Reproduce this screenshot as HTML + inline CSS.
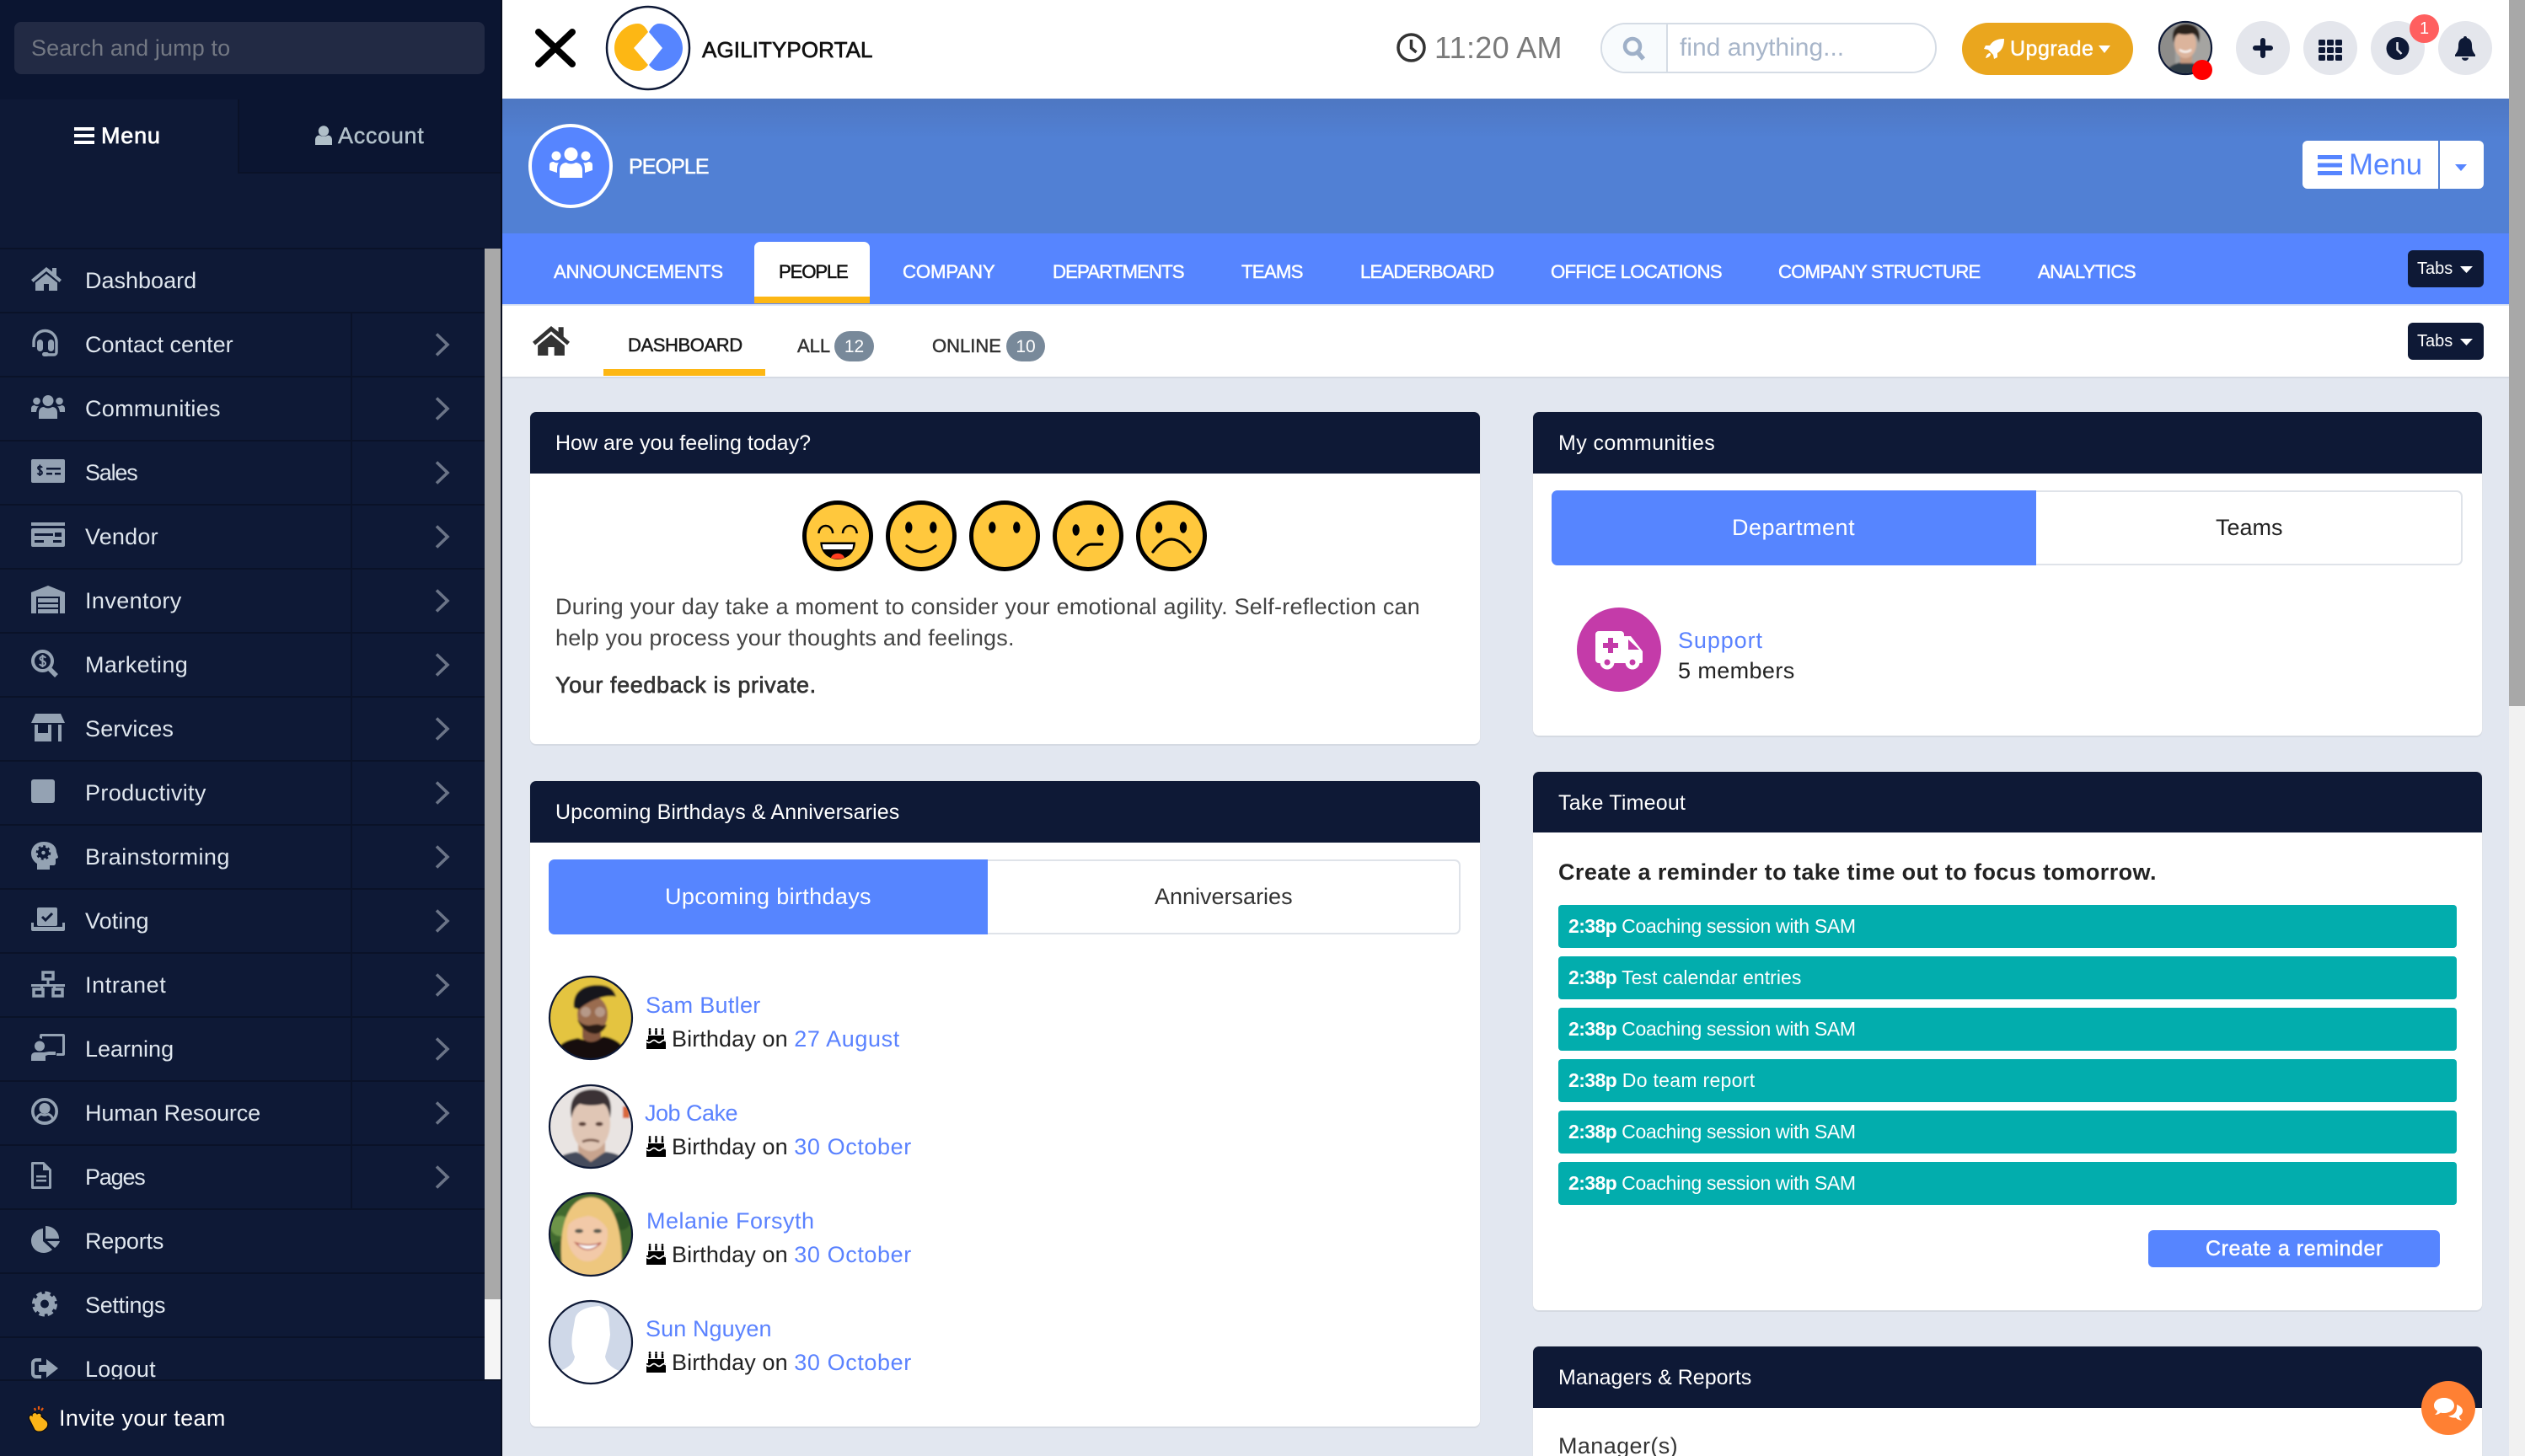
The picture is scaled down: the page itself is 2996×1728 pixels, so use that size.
<!DOCTYPE html>
<html lang="en"><head><meta charset="utf-8"><title>AgilityPortal</title>
<style>
html{margin:0;padding:0;background:#e2e7f0;width:2996px;height:1728px;overflow:hidden}
body{margin:0;padding:0;background:#e2e7f0;position:relative;width:2996px;height:1728px;overflow:hidden;font-family:"Liberation Sans",Arial,sans-serif;color:#333}
div,svg,span.t{position:absolute}
svg{overflow:visible}
.t{position:absolute;white-space:nowrap;line-height:1}
.semi{-webkit-text-stroke:.5px currentColor}
#side{left:0;top:0;width:596px;height:1728px;background:#0e1936;border-right:2px solid #070d20;box-sizing:border-box;overflow:hidden}
#list{left:0;top:294px;width:575px;height:1343px;overflow:hidden}
.row{left:0;width:575px;height:74px;border-top:2px solid #0a1228;color:#dfe6ee;font-size:27px;line-height:74px}
.row span{position:absolute;left:101px;white-space:nowrap}
.row i{position:absolute;left:416px;top:0;width:2px;height:76px;background:#0a1228}
.row svg.ch{left:516px;top:23px}
.ic{fill:#94a2b3}
.card{background:#fff;border-radius:7px;box-shadow:0 2px 0 #d5dae2,0 0 0 1px #e0e4ea}
.chd{background:#0e1936;left:0;top:0;border-radius:7px 7px 0 0}
.bar{left:1849px;width:1066px;height:51px;background:#02adad;border-radius:4px}
.bar+span b{letter-spacing:-.6px}
.nav{color:#fff;font-size:22.2px;top:312px}
.circ{width:64px;height:64px;border-radius:50%;background:#e4e6ec;top:25px}
</style></head>
<body>

<!-- ============ SIDEBAR ============ -->
<div id="side">
  <div style="left:0;top:0;width:596px;height:118px;background:#0b1531"></div>
  <div style="left:17px;top:26px;width:558px;height:62px;background:#222a44;border-radius:8px"></div>
  <span class="t" style="left:37px;top:44px;font-size:27px;color:#737883;letter-spacing:.12px">Search and jump to</span>

  <div style="left:282px;top:118px;width:312px;height:86px;background:#0b1531;border-left:2px solid #0a1228;border-bottom:2px solid #0a1228"></div>
  <svg style="left:88px;top:151px" width="24" height="20"><path fill="#fff" d="M0 0h24v4H0zM0 8h24v4H0zM0 16h24v4H0z"/></svg>
  <span class="t semi" style="left:120px;top:148px;font-size:27px;color:#fff;letter-spacing:.8px;-webkit-text-stroke-width:.7px">Menu</span>
  <svg style="left:374px;top:149px" width="20" height="23"><circle cx="10" cy="6.500" r="6.200" fill="#b0bfc9"/><path fill="#b0bfc9" d="M0 23v-6c0-4 3-5.500 5-5.500 3 2 7 2 10 0 2 0 5 1.500 5 5.500v6z"/></svg>
  <span class="t semi" style="left:401px;top:148px;font-size:27px;color:#b0bfc9;letter-spacing:.7px">Account</span>

  <div id="list">
    <div class="row" style="top:0"><span>Dashboard</span></div>
    <div class="row" style="top:76px"><span>Contact center</span><i></i><svg class="ch" width="18" height="28"><path d="M2 1.500L15 14 2 26.500" fill="none" stroke="#6b7487" stroke-width="3.600"/></svg></div>
    <div class="row" style="top:152px"><span style="letter-spacing:.3px">Communities</span><i></i><svg class="ch" width="18" height="28"><path d="M2 1.500L15 14 2 26.500" fill="none" stroke="#6b7487" stroke-width="3.600"/></svg></div>
    <div class="row" style="top:228px"><span style="letter-spacing:-1.200px">Sales</span><i></i><svg class="ch" width="18" height="28"><path d="M2 1.500L15 14 2 26.500" fill="none" stroke="#6b7487" stroke-width="3.600"/></svg></div>
    <div class="row" style="top:304px"><span style="letter-spacing:.2px">Vendor</span><i></i><svg class="ch" width="18" height="28"><path d="M2 1.500L15 14 2 26.500" fill="none" stroke="#6b7487" stroke-width="3.600"/></svg></div>
    <div class="row" style="top:380px"><span style="letter-spacing:.4px">Inventory</span><i></i><svg class="ch" width="18" height="28"><path d="M2 1.500L15 14 2 26.500" fill="none" stroke="#6b7487" stroke-width="3.600"/></svg></div>
    <div class="row" style="top:456px"><span style="letter-spacing:.4px">Marketing</span><i></i><svg class="ch" width="18" height="28"><path d="M2 1.500L15 14 2 26.500" fill="none" stroke="#6b7487" stroke-width="3.600"/></svg></div>
    <div class="row" style="top:532px"><span style="letter-spacing:.2px">Services</span><i></i><svg class="ch" width="18" height="28"><path d="M2 1.500L15 14 2 26.500" fill="none" stroke="#6b7487" stroke-width="3.600"/></svg></div>
    <div class="row" style="top:608px"><span style="letter-spacing:.35px">Productivity</span><i></i><svg class="ch" width="18" height="28"><path d="M2 1.500L15 14 2 26.500" fill="none" stroke="#6b7487" stroke-width="3.600"/></svg></div>
    <div class="row" style="top:684px"><span style="letter-spacing:.4px">Brainstorming</span><i></i><svg class="ch" width="18" height="28"><path d="M2 1.500L15 14 2 26.500" fill="none" stroke="#6b7487" stroke-width="3.600"/></svg></div>
    <div class="row" style="top:760px"><span style="letter-spacing:.1px">Voting</span><i></i><svg class="ch" width="18" height="28"><path d="M2 1.500L15 14 2 26.500" fill="none" stroke="#6b7487" stroke-width="3.600"/></svg></div>
    <div class="row" style="top:836px"><span style="letter-spacing:.6px">Intranet</span><i></i><svg class="ch" width="18" height="28"><path d="M2 1.500L15 14 2 26.500" fill="none" stroke="#6b7487" stroke-width="3.600"/></svg></div>
    <div class="row" style="top:912px"><span>Learning</span><i></i><svg class="ch" width="18" height="28"><path d="M2 1.500L15 14 2 26.500" fill="none" stroke="#6b7487" stroke-width="3.600"/></svg></div>
    <div class="row" style="top:988px"><span style="letter-spacing:-.15px">Human Resource</span><i></i><svg class="ch" width="18" height="28"><path d="M2 1.500L15 14 2 26.500" fill="none" stroke="#6b7487" stroke-width="3.600"/></svg></div>
    <div class="row" style="top:1064px"><span style="letter-spacing:-1.200px">Pages</span><i></i><svg class="ch" width="18" height="28"><path d="M2 1.500L15 14 2 26.500" fill="none" stroke="#6b7487" stroke-width="3.600"/></svg></div>
    <div class="row" style="top:1140px"><span style="letter-spacing:-.2px">Reports</span></div>
    <div class="row" style="top:1216px"><span style="letter-spacing:-.3px">Settings</span></div>
    <div class="row" style="top:1292px"><span style="letter-spacing:.2px">Logout</span></div>
  </div>

  <!-- sidebar icons -->
  <svg class="ic" style="left:37px;top:317px" width="36" height="28" viewBox="0 0 36 28"><path d="M18 0L0 15l2.500 3L18 5l15.500 13 2.500-3-6-5V1h-5v4.500z"/><path d="M18 8L5 18.500V28h10v-8h6v8h10V18.500z"/></svg>
  <svg style="left:37px;top:391px" width="33" height="32" viewBox="0 0 33 32"><path d="M3 21v-6a13.500 13.500 0 0 1 27 0v12a3 3 0 0 1-3 3h-9" fill="none" stroke="#94a2b3" stroke-width="3.400"/><rect x="7" y="12" width="7" height="14" rx="3.500" fill="#94a2b3"/><rect x="20" y="12" width="7" height="14" rx="3.500" fill="#94a2b3"/><rect x="13" y="27" width="8" height="5" rx="2.500" fill="#94a2b3"/></svg>
  <svg class="ic" style="left:37px;top:469px" width="40" height="28" viewBox="0 0 40 28"><circle cx="20" cy="6.500" r="6.500"/><circle cx="6.500" cy="7" r="4.300"/><circle cx="33.500" cy="7" r="4.300"/><path d="M9 28v-7c0-5 3-7 6-7 3 2 7 2 10 0 3 0 6 2 6 7v7z"/><path d="M0 20v-4c0-3 2-4 4-4 1 1 3 1.500 5 1-2 2-2.500 4-3 7zM40 20v-4c0-3-2-4-4-4-1 1-3 1.500-5 1 2 2 2.500 4 3 7z"/></svg>
  <svg style="left:37px;top:545px" width="40" height="28" viewBox="0 0 40 28"><rect width="40" height="28" rx="2" fill="#94a2b3"/><path d="M13 10c-1-2-5-2-5 .5S13 13 13 16s-4.500 2.500-5.500.5M10.300 6.500V20" fill="none" stroke="#0e1936" stroke-width="1.800"/><path d="M18 10h17v2.500H18zM18 16h7v2.500h-7zM28 16h7v2.500h-7z" fill="#0e1936"/></svg>
  <svg style="left:37px;top:620px" width="40" height="29" viewBox="0 0 40 29"><rect width="40" height="4" fill="#94a2b3"/><rect y="7" width="40" height="22" rx="2" fill="#94a2b3"/><path d="M4 13h22v3H4zM4 21h11v3H4zM28 12h8v5h-8zM26 21h10v3H26z" fill="#0e1936"/></svg>
  <svg style="left:37px;top:695px" width="40" height="33" viewBox="0 0 40 33"><path fill="#94a2b3" d="M0 8L20 0l20 8v25h-6V13H6v20H0z"/><path fill="#94a2b3" d="M8 15h24v5H8zM8 22h24v4H8zM8 28h24v5H8z"/></svg>
  <svg style="left:37px;top:771px" width="32" height="33" viewBox="0 0 32 33"><circle cx="13.500" cy="13.500" r="11.500" fill="none" stroke="#94a2b3" stroke-width="4"/><path d="M21 22l9 9" stroke="#94a2b3" stroke-width="5.500"/><path d="M17 10c-1-2.500-6.500-2.500-6.500.5S17 13 17 16.500s-6 3-7 .5M13.500 6v15" fill="none" stroke="#94a2b3" stroke-width="2"/></svg>
  <svg style="left:37px;top:847px" width="40" height="33" viewBox="0 0 40 33"><path fill="#94a2b3" d="M5 0h30l5 11H0zM4 13h4v10h12V13h4v20H4zM32 13h4v20h-4z"/></svg>
  <svg style="left:37px;top:925px" width="28" height="28"><rect width="28" height="28" rx="3" fill="#94a2b3"/></svg>
  <svg style="left:37px;top:999px" width="32" height="33" viewBox="0 0 32 33"><path fill="#94a2b3" d="M15 0c10 0 15 6 15 12l2 6c0 1-1 2-3 2v5c0 2-1 3-3 3h-4v5H7v-7C2 23 0 18 0 14 0 6 6 0 15 0z"/><circle cx="14.500" cy="13" r="4.500" fill="none" stroke="#0e1936" stroke-width="4.500"/><circle cx="14.500" cy="13" r="7.500" fill="none" stroke="#0e1936" stroke-width="2.500" stroke-dasharray="2.800 3"/></svg>
  <svg style="left:37px;top:1077px" width="40" height="28" viewBox="0 0 40 28"><rect x="7" y="0" width="24" height="22" rx="2" fill="#94a2b3"/><path d="M13 11l4 4 8-8" fill="none" stroke="#0e1936" stroke-width="3"/><path d="M0 18h3v6h34v-6h3v8a2 2 0 0 1-2 2H2a2 2 0 0 1-2-2z" fill="#94a2b3"/><rect x="3" y="23" width="34" height="2" fill="#94a2b3"/></svg>
  <svg style="left:37px;top:1152px" width="40" height="32" viewBox="0 0 40 32"><g fill="none" stroke="#94a2b3" stroke-width="3.500"><rect x="14" y="2" width="12" height="8"/><rect x="3" y="22" width="11" height="8"/><rect x="26" y="22" width="11" height="8"/></g><path d="M18.500 11h3v5H40v3H29v3h-3v-3H14v3h-3v-3H0v-3h18.500z" fill="#94a2b3"/></svg>
  <svg style="left:37px;top:1227px" width="40" height="32" viewBox="0 0 40 32"><circle cx="10" cy="14.500" r="6" fill="#94a2b3"/><path d="M0 32v-5c0-4 3-5 5-5h10l6-1h8v4h-9l-3 1v6z" fill="#94a2b3"/><path d="M10 5V2a2 2 0 0 1 2-2h26a2 2 0 0 1 2 2v22a2 2 0 0 1-2 2h-8v-3h7V3H13v3z" fill="#94a2b3"/></svg>
  <svg style="left:37px;top:1303px" width="32" height="32" viewBox="0 0 32 32"><circle cx="16" cy="16" r="14.200" fill="none" stroke="#94a2b3" stroke-width="3.600"/><circle cx="16" cy="12.500" r="6.500" fill="#94a2b3"/><path d="M5 25c1-5 5-7 7-7 2 1.500 6 1.500 8 0 2 0 6 2 7 7-6 6-16 6-22 0z" fill="#94a2b3"/><path d="M8 25c1-3 3-4 4.500-4 2 1 5 1 7 0 1.500 0 3.500 1 4.500 4-4 4-12 4-16 0z" fill="#0e1936"/></svg>
  <svg style="left:37px;top:1379px" width="24" height="32" viewBox="0 0 24 32"><path d="M1.500 1.500h13l8 8v21h-21z" fill="none" stroke="#94a2b3" stroke-width="3" stroke-linejoin="round"/><path d="M14 2v8h8z" fill="#94a2b3"/><path d="M6 16h12v2.500H6zM6 21h12v2.500H6z" fill="#94a2b3"/></svg>
  <svg style="left:37px;top:1455px" width="34" height="32" viewBox="0 0 34 32"><path d="M14 3C6 4 0 10 0 17.500 0 26 7 32 15 32c4 0 8-2 10-4L14 18z" fill="#94a2b3"/><path d="M17 0v15h16C33 7 26 0 17 0z" fill="#94a2b3"/><path d="M19 18l9 8c2.500-2 5-5 6-8z" fill="#94a2b3"/></svg>
  <svg style="left:38px;top:1532px" width="30" height="31" viewBox="0 0 30 31"><circle cx="15" cy="15.500" r="8.500" fill="none" stroke="#94a2b3" stroke-width="7"/><circle cx="15" cy="15.500" r="13" fill="none" stroke="#94a2b3" stroke-width="4" stroke-dasharray="6.500 3.700"/></svg>
  <svg style="left:37px;top:1611px" width="32" height="26" viewBox="0 0 32 26"><path d="M12 3H6a4 4 0 0 0-4 4v12a4 4 0 0 0 4 4h6" fill="none" stroke="#94a2b3" stroke-width="4"/><path d="M9 9h9V2l14 11-14 11v-7H9z" fill="#94a2b3"/></svg>

  <!-- sidebar scrollbar -->
  <div style="left:575px;top:295px;width:20px;height:1247px;background:#a9a9a9"></div>
  <div style="left:575px;top:1542px;width:20px;height:95px;background:#f5f5f5"></div>

  <!-- footer -->
  <div style="left:0;top:1637px;width:596px;height:91px;background:#0e1936;border-top:2px solid #0a1228;box-sizing:border-box"></div>
  <svg style="left:31px;top:1669px" width="30" height="31" viewBox="0 0 30 31"><path d="M4 16C2 12 5 9 7 11c0-3 4-5 6-2 3-2 6 0 5 3l6 5c3 3 2 8-1 10-4 4-10 4-13 1z" fill="#fbb418" stroke="#0a0a10" stroke-width="1.200"/><path d="M10 2l1 3M15 0v4M20 2l-2 3" stroke="#e8590c" stroke-width="2.200"/></svg>
  <span class="t" style="left:70px;top:1670px;font-size:27px;color:#fff;letter-spacing:.35px">Invite your team</span>
</div>

<!-- ============ TOP BAR ============ -->
<div style="left:596px;top:0;width:2381px;height:117px;background:#fff"></div>
<svg style="left:634px;top:33px" width="50" height="48"><path d="M5 5l40 38M45 5L5 43" stroke="#000" stroke-width="8" stroke-linecap="round"/></svg>
<svg style="left:0;top:0" width="1" height="1"><circle cx="769" cy="57" r="49" fill="#fff" stroke="#0e1936" stroke-width="2.500"/><path fill="#fdb714" d="M757 28C742 28 729 42 729 57C729 72 742 84 757 84C762 84 766 81 769 77L752 57L769 38C766 32 762 28 757 28Z"/><path fill="#5685ff" d="M782 28C797 28 810 42 810 57C810 72 797 84 782 84C777 84 773 81 770 77L786 57L770 38C773 32 777 28 782 28Z"/></svg>
<span class="t semi" style="left:833px;top:46px;font-size:26px;color:#111;letter-spacing:.1px;-webkit-text-stroke-width:.7px">AGILITYPORTAL</span>

<svg style="left:1657px;top:39px" width="35" height="35"><circle cx="17.500" cy="17.500" r="15.500" fill="none" stroke="#333" stroke-width="3.500"/><path d="M17.500 8v10l6 5" fill="none" stroke="#333" stroke-width="3.500"/></svg>
<span class="t" style="left:1702px;top:39px;font-size:36px;color:#7a7a7a;letter-spacing:.3px">11:20 AM</span>

<div style="left:1899px;top:27px;width:399px;height:60px;border:2px solid #d5dce5;border-radius:30px;box-sizing:border-box;background:#fff;overflow:hidden">
  <div style="left:0;top:0;width:76px;height:56px;background:#f8fbfd;border-right:2px solid #d5dce5"></div>
</div>
<svg style="left:1925px;top:43px" width="28" height="29"><circle cx="12" cy="12" r="9" fill="none" stroke="#9fb0c8" stroke-width="4.500"/><path d="M18 19l7 8" stroke="#9fb0c8" stroke-width="5.500"/></svg>
<span class="t" style="left:1993px;top:42px;font-size:30px;color:#a7b5c9">find anything...</span>

<div style="left:2328px;top:27px;width:203px;height:62px;border-radius:31px;background:#eaa61e"></div>
<svg style="left:2354px;top:46px" width="24" height="24" viewBox="0 0 24 24"><path fill="#fff" d="M24 0C15 0 10 3 7 8H2L0 12l5 1 6 6 1 5 4-2v-5c5-3 8-8 8-17zM7 17c-2 0-4 2-5 6 4-1 6-3 6-5z"/></svg>
<span class="t semi" style="left:2385px;top:46px;font-size:25px;color:#fff;letter-spacing:.5px">Upgrade</span>
<svg style="left:2490px;top:54px" width="14" height="9"><path d="M0 0h14L7 9z" fill="#fff"/></svg>

<svg style="left:2561px;top:25px" width="64" height="64" viewBox="0 0 64 64">
  <defs><clipPath id="ca"><circle cx="32" cy="32" r="30"/></clipPath><filter id="bl"><feGaussianBlur stdDeviation="1"/></filter><filter id="bl2"><feGaussianBlur stdDeviation="1.200"/></filter></defs>
  <g clip-path="url(#ca)"><g filter="url(#bl)"><rect width="64" height="64" fill="#a5a4a1"/><rect width="20" height="64" fill="#8d8c8a"/><path d="M8 64c2-10 10-14 24-16 12 2 22 6 24 16z" fill="#2d3a44"/><rect x="26" y="36" width="14" height="14" fill="#c69a80"/><ellipse cx="32" cy="27" rx="13" ry="17" fill="#dcb49c"/><path d="M18 26C14 10 22 3 33 3s19 7 15 23c-2-7-4-10-8-11-8 2-13 1-16 0-3 2-5 5-6 11z" fill="#2a201c"/><path d="M25 34q7 5 14 0" stroke="#fff" stroke-width="2" fill="none"/></g></g>
  <circle cx="32" cy="32" r="31" fill="none" stroke="#0e1936" stroke-width="2.200"/>
</svg>
<div style="left:2601px;top:71px;width:24px;height:24px;border-radius:50%;background:#f00"></div>

<div class="circ" style="left:2653px"></div>
<svg style="left:2673px;top:45px" width="24" height="24"><path d="M12 3v18M3 12h18" stroke="#0e1936" stroke-width="6" stroke-linecap="round"/></svg>
<div class="circ" style="left:2733px"></div>
<svg style="left:2751px;top:47px" width="28" height="25" fill="#0e1936"><rect width="8" height="7" rx="1.500"/><rect x="10" width="8" height="7" rx="1.500"/><rect x="20" width="8" height="7" rx="1.500"/><rect y="9" width="8" height="7" rx="1.500"/><rect x="10" y="9" width="8" height="7" rx="1.500"/><rect x="20" y="9" width="8" height="7" rx="1.500"/><rect y="18" width="8" height="7" rx="1.500"/><rect x="10" y="18" width="8" height="7" rx="1.500"/><rect x="20" y="18" width="8" height="7" rx="1.500"/></svg>
<div class="circ" style="left:2813px"></div>
<svg style="left:2831px;top:44px" width="28" height="27"><circle cx="14" cy="13.500" r="13.500" fill="#0e1936"/><path d="M13.500 6v9l5 5" fill="none" stroke="#e4e6ec" stroke-width="2.500"/></svg>
<div class="circ" style="left:2893px"></div>
<svg style="left:2913px;top:43px" width="24" height="29"><path fill="#0e1936" d="M12 0c1.500 0 2 1 2 2 4 1 6 4 6 9 0 5 1 7 4 11v2H0v-2c3-4 4-6 4-11 0-5 2-8 6-9 0-1 .5-2 2-2z"/><path fill="#0e1936" d="M8 25.500h8c0 2-2 3.500-4 3.500s-4-1.500-4-3.500z"/></svg>
<div style="left:2859px;top:17px;width:35px;height:34px;border-radius:50%;background:#ff5f5f;color:#fff;font-size:20px;line-height:34px;text-align:center">1</div>

<!-- ============ HEADER BAND ============ -->
<div style="left:596px;top:117px;width:2381px;height:160px;background:linear-gradient(#4e77c2,#5180d4 30%,#5180d4)"></div>
<div style="left:627px;top:147px;width:100px;height:100px;border-radius:50%;background:#5685ff;border:4px solid #fff;box-sizing:border-box"></div>
<svg style="left:652px;top:175px" width="51" height="36" viewBox="0 0 51 36" fill="#fff"><circle cx="25.500" cy="8" r="8"/><circle cx="8" cy="10" r="5.500"/><circle cx="43" cy="10" r="5.500"/><path d="M12 36v-9c0-6 4-9 8-9 3 2 8 2 11 0 4 0 8 3 8 9v9z"/><path d="M0 27v-6c0-3 2-4 5-4 1 1 4 2 6 1-2 3-2 6-2 12zM51 27v-6c0-3-2-4-5-4-1 1-4 2-6 1 2 3 2 6 2 12z"/></svg>
<span class="t semi" style="left:746px;top:186px;font-size:25px;color:#fff;letter-spacing:-.9px">PEOPLE</span>

<div style="left:2732px;top:167px;width:215px;height:57px;background:#fff;border-radius:6px"></div>
<div style="left:2893px;top:167px;width:2px;height:57px;background:#5180d4"></div>
<svg style="left:2750px;top:184px" width="29" height="24"><path fill="#5685ff" d="M0 0h29v5H0zM0 9.500h29v5H0zM0 19h29v5H0z"/></svg>
<span class="t" style="left:2787px;top:179px;font-size:34.800px;color:#5685ff">Menu</span>
<svg style="left:2913px;top:195px" width="14" height="8"><path d="M0 0h14L7 8z" fill="#5685ff"/></svg>

<!-- ============ NAV BAND ============ -->
<div style="left:596px;top:277px;width:2381px;height:84px;background:#5685ff"></div>
<div style="left:596px;top:361px;width:2381px;height:2px;background:#dfe6f3"></div>
<div style="left:895px;top:287px;width:137px;height:73px;background:#fff;border-radius:7px 7px 0 0;overflow:hidden"><div style="left:0;top:65px;width:137px;height:8px;background:#fdb714"></div></div>
<span class="t nav semi" style="left:657px;letter-spacing:-.3px">ANNOUNCEMENTS</span>
<span class="t nav semi" style="left:924px;color:#111;letter-spacing:-1.200px">PEOPLE</span>
<span class="t nav semi" style="left:1071px;letter-spacing:-.15px">COMPANY</span>
<span class="t nav semi" style="left:1249px;letter-spacing:-.9px">DEPARTMENTS</span>
<span class="t nav semi" style="left:1473px;letter-spacing:-.76px">TEAMS</span>
<span class="t nav semi" style="left:1614px;letter-spacing:-.87px">LEADERBOARD</span>
<span class="t nav semi" style="left:1840px;letter-spacing:-.7px">OFFICE LOCATIONS</span>
<span class="t nav semi" style="left:2110px;letter-spacing:-.8px">COMPANY STRUCTURE</span>
<span class="t nav semi" style="left:2418px;letter-spacing:-.63px">ANALYTICS</span>
<div style="left:2857px;top:297px;width:90px;height:44px;background:#0e1936;border-radius:6px"></div>
<span class="t" style="left:2868px;top:309px;font-size:20px;color:#fff">Tabs</span>
<svg style="left:2919px;top:316px" width="15" height="8"><path d="M0 0h15L7.500 8z" fill="#fff"/></svg>

<!-- ============ SUB TABS ============ -->
<div style="left:596px;top:363px;width:2381px;height:84px;background:#fff"></div>
<div style="left:596px;top:447px;width:2381px;height:2px;background:#d5dae3"></div>
<svg style="left:632px;top:387px" width="44" height="35" viewBox="0 0 36 28" preserveAspectRatio="none"><path fill="#333" d="M18 0L0 15l2.500 3L18 5l15.500 13 2.500-3-6-5V1h-5v4.500z"/><path fill="#333" d="M18 8L5 18.500V28h10v-8h6v8h10V18.500z"/></svg>
<span class="t semi" style="left:745px;top:399px;font-size:22px;color:#1a1a1a;letter-spacing:-.4px">DASHBOARD</span>
<div style="left:716px;top:438px;width:192px;height:8px;background:#fdb714"></div>
<span class="t semi" style="left:946px;top:400px;font-size:22px;color:#333">ALL</span>
<div style="left:990px;top:393px;width:47px;height:36px;border-radius:18px;background:#78899a;color:#fff;font-size:21px;line-height:37px;text-align:center">12</div>
<span class="t semi" style="left:1106px;top:400px;font-size:22px;color:#333">ONLINE</span>
<div style="left:1194px;top:393px;width:46px;height:36px;border-radius:18px;background:#78899a;color:#fff;font-size:21px;line-height:37px;text-align:center">10</div>
<div style="left:2857px;top:383px;width:90px;height:44px;background:#0e1936;border-radius:6px"></div>
<span class="t" style="left:2868px;top:395px;font-size:20px;color:#fff">Tabs</span>
<svg style="left:2919px;top:402px" width="15" height="8"><path d="M0 0h15L7.500 8z" fill="#fff"/></svg>

<!-- ============ FEELING CARD ============ -->
<div class="card" style="left:629px;top:489px;width:1127px;height:394px"><div class="chd" style="width:1127px;height:73px"></div></div>
<span class="t" style="left:659px;top:514px;font-size:25px;color:#fff">How are you feeling today?</span>
<svg style="left:0;top:0" width="1" height="1">
  <g transform="translate(994 636)"><circle r="39.500" fill="#ffc83d" stroke="#000" stroke-width="5"/><path d="M-22.500-3a8.300 9 0 0 1 16.600 0M6-3a8.300 9 0 0 1 16.600 0" fill="none" stroke="#000" stroke-width="2.500"/><path d="M-20.700 7.500H21C21 20 10 28 0 28S-20.700 20-20.700 7.500z" fill="#000"/><path d="M-18.300 10h36.600l-1 6h-34.600z" fill="#fff"/><path d="M-8 26c2-7 14-7 16 0-5 2-11 2-16 0z" fill="#ff3d1f"/></g>
  <g transform="translate(1093 636)"><circle r="39.500" fill="#ffc83d" stroke="#000" stroke-width="5"/><ellipse cx="-14.700" cy="-10" rx="4.200" ry="6.700"/><ellipse cx="14.300" cy="-10" rx="4.200" ry="6.700"/><path d="M-17 12Q0 26 17 12" fill="none" stroke="#000" stroke-width="3.200" stroke-linecap="round"/></g>
  <g transform="translate(1192 636)"><circle r="39.500" fill="#ffc83d" stroke="#000" stroke-width="5"/><ellipse cx="-14.700" cy="-10" rx="4.200" ry="6.700"/><ellipse cx="14.300" cy="-10" rx="4.200" ry="6.700"/></g>
  <g transform="translate(1291 636)"><circle r="39.500" fill="#ffc83d" stroke="#000" stroke-width="5"/><ellipse cx="-14.300" cy="-7" rx="4.200" ry="6.700"/><ellipse cx="14.700" cy="-7" rx="4.200" ry="6.700"/><path d="M-12 22Q-4 10 4 10H16.700" fill="none" stroke="#000" stroke-width="3.200" stroke-linecap="round"/></g>
  <g transform="translate(1390 636)"><circle r="39.500" fill="#ffc83d" stroke="#000" stroke-width="5"/><ellipse cx="-15" cy="-10" rx="4.200" ry="6.700"/><ellipse cx="14" cy="-10" rx="4.200" ry="6.700"/><path d="M-22 19Q0-11 22 19" fill="none" stroke="#000" stroke-width="3.200" stroke-linecap="round"/></g>
</svg>
<span class="t" style="left:659px;top:707px;font-size:27px;color:#444;letter-spacing:.23px">During your day take a moment to consider your emotional agility. Self-reflection can</span>
<span class="t" style="left:659px;top:744px;font-size:27px;color:#444;letter-spacing:.2px">help you process your thoughts and feelings.</span>
<span class="t semi" style="left:659px;top:800px;font-size:27px;color:#333;letter-spacing:.6px;-webkit-text-stroke-width:.7px">Your feedback is private.</span>

<!-- ============ BIRTHDAYS CARD ============ -->
<div class="card" style="left:629px;top:927px;width:1127px;height:766px"><div class="chd" style="width:1127px;height:73px"></div></div>
<span class="t" style="left:659px;top:952px;font-size:25px;color:#fff;letter-spacing:.12px">Upcoming Birthdays &amp; Anniversaries</span>
<div style="left:651px;top:1020px;width:1082px;height:89px;border:2px solid #dfe3e9;border-radius:7px;box-sizing:border-box"></div>
<div style="left:651px;top:1020px;width:521px;height:89px;background:#5685ff;border-radius:7px 0 0 7px"></div>
<span class="t" style="left:789px;top:1051px;font-size:27px;color:#fff;letter-spacing:.35px">Upcoming birthdays</span>
<span class="t" style="left:1370px;top:1051px;font-size:27px;color:#333">Anniversaries</span>

<svg style="left:651px;top:1158px" width="100" height="100" viewBox="0 0 100 100"><defs><clipPath id="c1"><circle cx="50" cy="50" r="49"/></clipPath></defs><g clip-path="url(#c1)"><g filter="url(#bl)"><rect width="100" height="100" fill="#e4c43f"/><path d="M5 100c2-18 16-24 30-26 10 4 20 3 30-2 14 2 26 10 32 28z" fill="#120c0a"/><path d="M40 60h22v14c-8 6-16 6-22 0z" fill="#84563f"/><ellipse cx="52" cy="46" rx="18" ry="22" fill="#9a6c50"/><path d="M34 52c4 10 12 17 22 17 6-1 11-5 13-11l-6 1c-6-3-11 0-15 0-6 0-10-3-14-7z" fill="#2a1a14"/><path d="M30 38C28 22 38 11 58 11c14 0 20 6 22 14-12-3-32 4-44 15z" fill="#15121a"/><circle cx="44" cy="43" r="6" fill="#c9b8ae" opacity=".6"/><circle cx="61" cy="43" r="6" fill="#c9b8ae" opacity=".6"/></g></g><circle cx="50" cy="50" r="49" fill="none" stroke="#0e1936" stroke-width="2.200"/></svg>
<svg style="left:651px;top:1287px" width="100" height="100" viewBox="0 0 100 100"><defs><clipPath id="c2"><circle cx="50" cy="50" r="49"/></clipPath></defs><g clip-path="url(#c2)"><g filter="url(#bl)"><rect width="100" height="100" fill="#e9e4e2"/><rect x="88" y="26" width="8" height="14" fill="#d9683a"/><path d="M5 100c2-14 14-18 28-20l17 8 18-8c14 2 24 6 28 20z" fill="#454c5c"/><path d="M35 66h32v14L50 92 35 80z" fill="#c8a48e"/><ellipse cx="50" cy="46" rx="23" ry="33" fill="#e0c6b5"/><path d="M27 40C23 16 34 6 52 6c16 0 25 10 21 34-2-10-4-15-8-17-10 3-22 2-28 0-6 3-8 9-10 17z" fill="#3a3035"/><ellipse cx="40" cy="47" rx="4.500" ry="2.500" fill="#5c4038"/><ellipse cx="60" cy="47" rx="4.500" ry="2.500" fill="#5c4038"/><path d="M40 68q10-4 20 0" stroke="#7a5a4c" stroke-width="3" fill="none"/></g></g><circle cx="50" cy="50" r="49" fill="none" stroke="#0e1936" stroke-width="2.200"/></svg>
<svg style="left:651px;top:1415px" width="100" height="100" viewBox="0 0 100 100"><defs><clipPath id="c3"><circle cx="50" cy="50" r="49"/></clipPath></defs><g clip-path="url(#c3)"><g filter="url(#bl)"><rect width="100" height="100" fill="#40692f"/><circle cx="14" cy="40" r="12" fill="#6d9448"/><circle cx="86" cy="34" r="11" fill="#2e5525"/><circle cx="14" cy="70" r="12" fill="#2e5525"/><path d="M18 100C10 60 16 8 48 6c30-2 42 40 38 94z" fill="#eec77e"/><ellipse cx="46" cy="50" rx="24" ry="32" fill="#f2c9a8"/><path d="M24 38C26 22 44 14 60 18c6 6 10 16 10 26-6-10-16-16-24-16-8 2-16 3-22 10z" fill="#eec77e"/><ellipse cx="36" cy="46" rx="5" ry="2.500" fill="#5a5a50"/><ellipse cx="58" cy="46" rx="5" ry="2.500" fill="#5a5a50"/><path d="M32 60q14 16 30 0q-15 5-30 0z" fill="#fff" stroke="#b85a50" stroke-width="1.500"/></g></g><circle cx="50" cy="50" r="49" fill="none" stroke="#0e1936" stroke-width="2.200"/></svg>
<svg style="left:651px;top:1543px" width="100" height="100" viewBox="0 0 100 100"><defs><clipPath id="c4"><circle cx="50" cy="50" r="49"/></clipPath></defs><g clip-path="url(#c4)"><rect width="100" height="100" fill="#cfd8e8"/><path d="M31 24C32 13 44 8 60 7c9 3 12 10 12 22l1 12c-1 10-4 18-6 26 2 10 10 15 28 22v12H5V88c14-6 24-10 26-21-4-8-4-18-3-26z" fill="#fff"/></g><circle cx="50" cy="50" r="49" fill="none" stroke="#0e1936" stroke-width="2.200"/></svg>

<span class="t" style="left:766px;top:1180px;font-size:27px;color:#5a82ff;letter-spacing:.3px">Sam Butler</span>
<svg style="left:767px;top:1220px" width="23" height="25"><path d="M4 8V3M11.500 8V3M19 8V3" stroke="#000" stroke-width="2.500"/><circle cx="4" cy="1.500" r="1.400"/><circle cx="11.500" cy="1.500" r="1.400"/><circle cx="19" cy="1.500" r="1.400"/><path d="M2 9h19v6H2z"/><path d="M0 14h23v11H0z"/><path d="M0 16q3 3 6 0t6 0 6 0 5 0" fill="none" stroke="#fff" stroke-width="1.700"/></svg>
<span class="t" style="left:797px;top:1220px;font-size:27px;color:#222;letter-spacing:.1px">Birthday on <span style="color:#5a82ff;letter-spacing:.6px">27 August</span></span>

<span class="t" style="left:765px;top:1308px;font-size:27px;color:#5a82ff;letter-spacing:-.5px">Job Cake</span>
<svg style="left:767px;top:1348px" width="23" height="25"><path d="M4 8V3M11.500 8V3M19 8V3" stroke="#000" stroke-width="2.500"/><circle cx="4" cy="1.500" r="1.400"/><circle cx="11.500" cy="1.500" r="1.400"/><circle cx="19" cy="1.500" r="1.400"/><path d="M2 9h19v6H2z"/><path d="M0 14h23v11H0z"/><path d="M0 16q3 3 6 0t6 0 6 0 5 0" fill="none" stroke="#fff" stroke-width="1.700"/></svg>
<span class="t" style="left:797px;top:1348px;font-size:27px;color:#222;letter-spacing:.1px">Birthday on <span style="color:#5a82ff;letter-spacing:.6px">30 October</span></span>

<span class="t" style="left:767px;top:1436px;font-size:27px;color:#5a82ff;letter-spacing:.5px">Melanie Forsyth</span>
<svg style="left:767px;top:1476px" width="23" height="25"><path d="M4 8V3M11.500 8V3M19 8V3" stroke="#000" stroke-width="2.500"/><circle cx="4" cy="1.500" r="1.400"/><circle cx="11.500" cy="1.500" r="1.400"/><circle cx="19" cy="1.500" r="1.400"/><path d="M2 9h19v6H2z"/><path d="M0 14h23v11H0z"/><path d="M0 16q3 3 6 0t6 0 6 0 5 0" fill="none" stroke="#fff" stroke-width="1.700"/></svg>
<span class="t" style="left:797px;top:1476px;font-size:27px;color:#222;letter-spacing:.1px">Birthday on <span style="color:#5a82ff;letter-spacing:.6px">30 October</span></span>

<span class="t" style="left:766px;top:1564px;font-size:27px;color:#5a82ff;letter-spacing:.1px">Sun Nguyen</span>
<svg style="left:767px;top:1604px" width="23" height="25"><path d="M4 8V3M11.500 8V3M19 8V3" stroke="#000" stroke-width="2.500"/><circle cx="4" cy="1.500" r="1.400"/><circle cx="11.500" cy="1.500" r="1.400"/><circle cx="19" cy="1.500" r="1.400"/><path d="M2 9h19v6H2z"/><path d="M0 14h23v11H0z"/><path d="M0 16q3 3 6 0t6 0 6 0 5 0" fill="none" stroke="#fff" stroke-width="1.700"/></svg>
<span class="t" style="left:797px;top:1604px;font-size:27px;color:#222;letter-spacing:.1px">Birthday on <span style="color:#5a82ff;letter-spacing:.6px">30 October</span></span>

<!-- ============ COMMUNITIES CARD ============ -->
<div class="card" style="left:1819px;top:489px;width:1126px;height:384px"><div class="chd" style="width:1126px;height:73px"></div></div>
<span class="t" style="left:1849px;top:514px;font-size:25px;color:#fff;letter-spacing:.4px">My communities</span>
<div style="left:1841px;top:582px;width:1081px;height:89px;border:2px solid #dfe3e9;border-radius:7px;box-sizing:border-box"></div>
<div style="left:1841px;top:582px;width:575px;height:89px;background:#5685ff;border-radius:7px 0 0 7px"></div>
<span class="t" style="left:2055px;top:613px;font-size:27px;color:#fff;letter-spacing:.5px">Department</span>
<span class="t" style="left:2629px;top:613px;font-size:27px;color:#222">Teams</span>
<div style="left:1871px;top:721px;width:100px;height:100px;border-radius:50%;background:#c43ba9"></div>
<svg style="left:1893px;top:749px" width="56" height="46" viewBox="0 0 56 46"><path d="M4 0h26a4 4 0 0 1 4 4v34H4a4 4 0 0 1-4-4V4a4 4 0 0 1 4-4z" fill="#fff"/><path d="M34 6h8l14 18v12a2 2 0 0 1-2 2H34z" fill="#fff"/><path d="M39 10v12h13z" fill="#c43ba9"/><path d="M15 8h6v6h6v6h-6v6h-6v-6H9v-6h6z" fill="#c43ba9"/><circle cx="14" cy="37" r="8.500" fill="#fff"/><circle cx="14" cy="37" r="3.500" fill="#c43ba9"/><circle cx="44" cy="37" r="8.500" fill="#fff"/><circle cx="44" cy="37" r="3.500" fill="#c43ba9"/></svg>
<span class="t" style="left:1991px;top:747px;font-size:27px;color:#5a82ff;letter-spacing:.9px">Support</span>
<span class="t" style="left:1991px;top:783px;font-size:27px;color:#222;letter-spacing:.4px">5 members</span>

<!-- ============ TIMEOUT CARD ============ -->
<div class="card" style="left:1819px;top:916px;width:1126px;height:639px"><div class="chd" style="width:1126px;height:72px"></div></div>
<span class="t" style="left:1849px;top:941px;font-size:25px;color:#fff;letter-spacing:.2px">Take Timeout</span>
<span class="t" style="left:1849px;top:1022px;font-size:27px;font-weight:700;color:#222;letter-spacing:.42px">Create a reminder to take time out to focus tomorrow.</span>
<div class="bar" style="top:1074px"></div><span class="t" style="left:1861px;top:1088px;font-size:23px;color:#fff;letter-spacing:-.3px"><b>2:38p</b> Coaching session with SAM</span>
<div class="bar" style="top:1135px"></div><span class="t" style="left:1861px;top:1149px;font-size:23px;color:#fff;letter-spacing:.05px"><b>2:38p</b> Test calendar entries</span>
<div class="bar" style="top:1196px"></div><span class="t" style="left:1861px;top:1210px;font-size:23px;color:#fff;letter-spacing:-.3px"><b>2:38p</b> Coaching session with SAM</span>
<div class="bar" style="top:1257px"></div><span class="t" style="left:1861px;top:1271px;font-size:23px;color:#fff;letter-spacing:.3px"><b>2:38p</b> Do team report</span>
<div class="bar" style="top:1318px"></div><span class="t" style="left:1861px;top:1332px;font-size:23px;color:#fff;letter-spacing:-.3px"><b>2:38p</b> Coaching session with SAM</span>
<div class="bar" style="top:1379px"></div><span class="t" style="left:1861px;top:1393px;font-size:23px;color:#fff;letter-spacing:-.3px"><b>2:38p</b> Coaching session with SAM</span>
<div style="left:2549px;top:1460px;width:346px;height:44px;background:#5685ff;border-radius:6px"></div>
<span class="t semi" style="left:2617px;top:1470px;font-size:25px;color:#fff;letter-spacing:.55px">Create a reminder</span>

<!-- ============ MANAGERS CARD ============ -->
<div class="card" style="left:1819px;top:1598px;width:1126px;height:130px;border-radius:7px 7px 0 0"><div class="chd" style="width:1126px;height:73px"></div></div>
<span class="t" style="left:1849px;top:1623px;font-size:25px;color:#fff">Managers &amp; Reports</span>
<span class="t" style="left:1849px;top:1703px;font-size:27px;color:#333;letter-spacing:.4px">Manager(s)</span>

<div style="left:2873px;top:1639px;width:64px;height:64px;border-radius:50%;background:#ff8033"></div>
<svg style="left:2888px;top:1659px" width="34" height="27" viewBox="0 0 34 27" fill="#fff"><path d="M12 0c7 0 12 4 12 9s-5 9-12 9c-2 0-3 0-4-.5C6 19 4 20 1 20c2-1.500 3-3 3-4.500C1.500 14 0 12 0 9c0-5 5-9 12-9z"/><path d="M27 8c4 1.500 7 4 7 7.500 0 2.500-1.500 4.500-4 6 0 2 1 3.500 3 5-3 0-5.500-1-7-3-3 .5-6 0-9-2 7-.5 11-5 10-13.500z"/></svg>

<!-- main scrollbar -->
<div style="left:2977px;top:0;width:19px;height:838px;background:#a8a8a8"></div>
<div style="left:2977px;top:838px;width:19px;height:890px;background:#f1f1f1"></div>
</body></html>
